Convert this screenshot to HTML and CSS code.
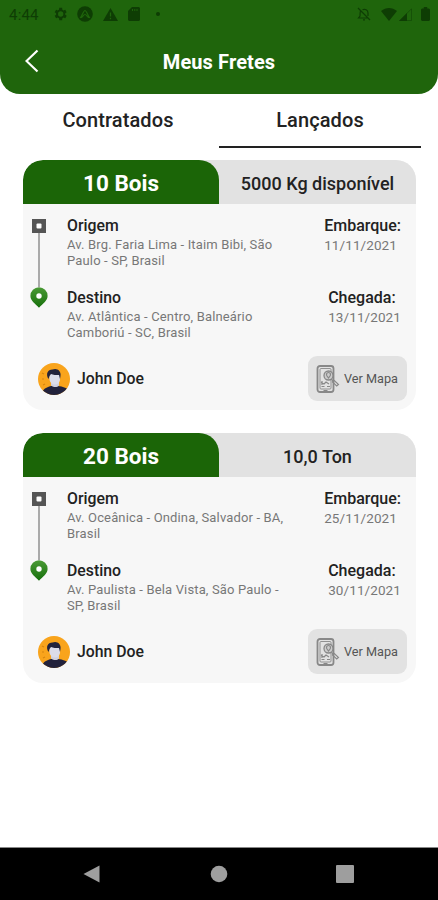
FILE: index.html
```html
<!DOCTYPE html>
<html lang="pt-BR">
<head>
    <meta charset="UTF-8">
    <meta name="viewport" content="width=device-width, initial-scale=1.0">
    <title>Meus Fretes</title>
    <link rel="stylesheet" href="styles.css">
</head>
<body>
    <!-- Ícones reutilizados nos cartões -->
    <svg class="icon-defs" width="0" height="0">
        <defs>
            <linearGradient id="pinFill" x1="0" y1="0" x2="0" y2="1">
                <stop offset="0" stop-color="#4a9a35"/>
                <stop offset="1" stop-color="#17700c"/>
            </linearGradient>
            <clipPath id="avatarClip"><circle cx="16" cy="16" r="16"/></clipPath>
            <symbol id="icon-origin" viewBox="0 0 14 14">
                <rect width="14" height="14" fill="#555"/>
                <rect x="4.5" y="4.5" width="5" height="5" rx="1" fill="#fff"/>
            </symbol>
            <symbol id="icon-pin" viewBox="0 0 18 21">
                <path d="M9 0.3a8.6 8.6 0 0 0-8.6 8.6c0 4.8 5 7.6 8.6 11.9 3.6-4.3 8.6-7.1 8.6-11.9A8.6 8.6 0 0 0 9 .3z" fill="url(#pinFill)"/>
                <circle cx="9" cy="9" r="2.7" fill="#fff"/>
            </symbol>
            <symbol id="icon-avatar" viewBox="0 0 32 32">
                <g clip-path="url(#avatarClip)">
                    <rect width="32" height="32" fill="#f9a41c"/>
                    <path d="M4 10l2 1M4 16h2M5 22l2-1" stroke="#d58410" stroke-width="1.2"/>
                    <path d="M4 32c0-6 4-7.500 9-9h7c5 .8 8 1.500 12 4.500v5z" fill="#22223c"/>
                    <path d="M13 17h8v5.500c-2 2-5 2-8 0z" fill="#d0d0e0"/>
                    <path d="M11.500 11H22v5c0 3-2 5.500-5 5.500S11.500 19 11.500 16z" fill="#dcdcea"/>
                    <path d="M10.500 16c-3-5-1-9.500 4-9.500 4-2 9 1 8 6.500l-.5 3-1-4c-3 0-6 0-8-1l-1.500 2z" fill="#22223c"/>
                </g>
            </symbol>
            <symbol id="icon-map" viewBox="0 0 24 28">
                <g fill="none" stroke="#888">
                    <rect x="1.5" y="1" width="16" height="26" rx="2.5" stroke-width="1.8"/>
                    <rect x="4" y="3.5" width="11" height="20.500" rx="1" stroke-width=".9"/>
                    <path d="M7.500 25.500h4M5 17.500l3 1.500 2-2 3 2M5.500 21.500h3M11 21.500h3M6 16v4" stroke-width="1.2"/>
                    <circle cx="12.500" cy="10.500" r="4.500" fill="#ccc" stroke-width="1.300"/>
                    <path d="M12.500 7.500c-2 0-2.500 2-1.500 3.500l1.500 2 1.500-2c1-1.500.5-3.500-1.500-3.500zM15.500 14l2 3" stroke-width="1.200"/>
                    <path d="M16.500 17l1.800-1.500 4.200 4-1.800 1.500z" stroke-width="1.100"/>
                </g>
            </symbol>
        </defs>
    </svg>

    <div class="app">
        <header class="header">
            <div class="status-bar">
                <div class="status-left">
                    <span class="clock">4:44</span>
                    <svg width="14" height="14" viewBox="2 2 20 20"><path fill="currentColor" fill-rule="evenodd" d="M19.400 13c.1-.7.1-1.300 0-2l2.100-1.600-2-3.500-2.500 1a7 7 0 0 0-1.700-1L15 3h-4l-.4 2.900c-.6.2-1.200.6-1.700 1l-2.500-1-2 3.500L6.500 11a7 7 0 0 0 0 2l-2.100 1.600 2 3.500 2.500-1c.5.400 1.100.7 1.700 1L11 21h4l.4-2.900c.6-.3 1.200-.6 1.700-1l2.500 1 2-3.500zM13 15.800a3.800 3.800 0 1 1 0-7.600 3.800 3.800 0 0 1 0 7.600z"/></svg>
                    <svg width="16" height="16" viewBox="0 0 16 16"><circle cx="8" cy="8" r="7.800" fill="currentColor"/><path d="M3.500 11.500C5.500 9 6.500 4.500 8 4.500s2.500 4.500 4.500 7c-2 .8-2.500-3-4.500-3s-2.500 3.800-4.500 3z" fill="none" stroke="#1f650c" stroke-width="1.200"/></svg>
                    <svg width="15" height="13" viewBox="0 0 15 13"><path d="M7.500 0L15 13H0z" fill="currentColor"/><path d="M7.500 4.500v4M7.500 9.800v1.500" stroke="#1f650c" stroke-width="1.300"/></svg>
                    <svg width="12" height="14" viewBox="0 0 12 14"><path d="M4 0h7l1 1v12l-1 1H1l-1-1V4z" fill="currentColor"/><path d="M4.500 2v2M6.800 2v2M9 2v2" stroke="#1f650c"/></svg>
                    <svg class="dot" width="4" height="4" viewBox="0 0 4 4"><circle cx="2" cy="2" r="2" fill="currentColor"/></svg>
                </div>
                <div class="status-right">
                    <svg class="bell" width="14" height="14" viewBox="0 0 14 14" fill="none" stroke="currentColor" stroke-width="1.200"><path d="M1 1l12 12M3.500 4C3 5 3 8 3 9l-1.500 2H11M5.500 2.800C8 1.500 11 3 11 6v3M6 12.800h2"/></svg>
                    <svg class="wifi" width="16" height="13" viewBox="0 0 16 13"><path d="M0 3c5-4 11-4 16 0L8 13z" fill="currentColor"/></svg>
                    <svg class="signal" width="13" height="13" viewBox="0 0 13 13"><path d="M12.500.8v11.700H.8z" fill="none" stroke="currentColor" opacity=".5"/><path d="M8 5v8H0z" fill="currentColor"/></svg>
                    <svg width="9" height="14" viewBox="0 0 9 14"><path d="M2.800 0h3.400v1.500H8l1 1V13l-1 1H1l-1-1V2.500l1-1h1.800z" fill="currentColor"/></svg>
                </div>
            </div>
            <div class="title-bar">
                <button class="back" aria-label="Voltar">
                    <svg width="14" height="24" viewBox="0 0 14 24"><path d="M12.500 1.500L1.500 12l11 10.500" fill="none" stroke="#fff" stroke-width="2.200"/></svg>
                </button>
                <h1>Meus Fretes</h1>
            </div>
        </header>

        <nav class="tabs">
            <a class="tab">Contratados</a>
            <a class="tab active">Lançados</a>
        </nav>

        <main class="list">
            <section class="card">
                <div class="card-top">
                    <div class="amount">10 Bois</div>
                    <div class="weight">5000 Kg disponível</div>
                </div>
                <div class="card-body">
                    <div class="route">
                        <div class="track">
                            <svg width="14" height="14"><use href="#icon-origin"/></svg>
                            <span class="line"></span>
                            <svg width="18" height="21"><use href="#icon-pin"/></svg>
                        </div>
                        <div class="stops">
                            <div class="stop">
                                <div>
                                    <h2>Origem</h2>
                                    <p>Av. Brg. Faria Lima - Itaim Bibi, São<br>Paulo - SP, Brasil</p>
                                </div>
                                <div class="date">
                                    <h2>Embarque:</h2>
                                    <p>11/11/2021</p>
                                </div>
                            </div>
                            <div class="stop">
                                <div>
                                    <h2>Destino</h2>
                                    <p>Av. Atlântica - Centro, Balneário<br>Camboriú - SC, Brasil</p>
                                </div>
                                <div class="date">
                                    <h2>Chegada:</h2>
                                    <p>13/11/2021</p>
                                </div>
                            </div>
                        </div>
                    </div>
                    <div class="card-footer">
                        <div class="person">
                            <svg width="32" height="32"><use href="#icon-avatar"/></svg>
                            <span>John Doe</span>
                        </div>
                        <button class="map-btn">
                            <svg width="24" height="28"><use href="#icon-map"/></svg>
                            <span>Ver Mapa</span>
                        </button>
                    </div>
                </div>
            </section>

            <section class="card">
                <div class="card-top">
                    <div class="amount">20 Bois</div>
                    <div class="weight">10,0 Ton</div>
                </div>
                <div class="card-body">
                    <div class="route">
                        <div class="track">
                            <svg width="14" height="14"><use href="#icon-origin"/></svg>
                            <span class="line"></span>
                            <svg width="18" height="21"><use href="#icon-pin"/></svg>
                        </div>
                        <div class="stops">
                            <div class="stop">
                                <div>
                                    <h2>Origem</h2>
                                    <p>Av. Oceânica - Ondina, Salvador - BA,<br>Brasil</p>
                                </div>
                                <div class="date">
                                    <h2>Embarque:</h2>
                                    <p>25/11/2021</p>
                                </div>
                            </div>
                            <div class="stop">
                                <div>
                                    <h2>Destino</h2>
                                    <p>Av. Paulista - Bela Vista, São Paulo -<br>SP, Brasil</p>
                                </div>
                                <div class="date">
                                    <h2>Chegada:</h2>
                                    <p>30/11/2021</p>
                                </div>
                            </div>
                        </div>
                    </div>
                    <div class="card-footer">
                        <div class="person">
                            <svg width="32" height="32"><use href="#icon-avatar"/></svg>
                            <span>John Doe</span>
                        </div>
                        <button class="map-btn">
                            <svg width="24" height="28"><use href="#icon-map"/></svg>
                            <span>Ver Mapa</span>
                        </button>
                    </div>
                </div>
            </section>
        </main>

        <footer class="nav-bar">
            <svg width="18" height="18" viewBox="0 0 18 18"><path d="M16.500.500v17L.5 9z" fill="#9e9e9e"/></svg>
            <svg width="18" height="18" viewBox="0 0 18 18"><circle cx="9" cy="9" r="8.300" fill="#9e9e9e"/></svg>
            <svg width="18" height="18" viewBox="0 0 18 18"><rect width="18" height="18" rx="1" fill="#9e9e9e"/></svg>
        </footer>
    </div>
</body>
</html>
```
FILE: styles.css
```css
* {
    box-sizing: border-box;
}

body {
    margin: 0;
    font-family: Roboto, sans-serif;
    background: #fff;
    color: #222;
    overflow: hidden;
}

svg {
    display: block;
    flex-shrink: 0;
}

h1, h2, p {
    margin: 0;
}

button {
    border: none;
    padding: 0;
    font-family: inherit;
    cursor: pointer;
}

.icon-defs {
    position: absolute;
}

.app {
    display: flex;
    flex-direction: column;
    height: 100vh;
}

/* Cabeçalho */
.header {
    height: 94px;
    background: #1f650c;
    border-radius: 0 0 20px 20px;
}

.status-bar {
    display: flex;
    justify-content: space-between;
    height: 28px;
    padding: 0 8px 0 9px;
    color: #0e3d04;
}

.status-left,
.status-right {
    display: flex;
    align-items: center;
}

.status-left {
    gap: 10px;
}

.clock {
    width: 34px;
    padding-top: 1px;
    font-size: 15px;
    letter-spacing: 0.2px;
}

.dot {
    margin-left: 6px;
}

.bell {
    margin-right: 10px;
}

.wifi {
    margin-right: 2px;
}

.signal {
    margin-right: 9px;
}

.title-bar {
    display: grid;
    grid-template-columns: 50px 1fr 50px;
    align-items: center;
    height: 66px;
}

.back {
    padding-left: 25px;
    background: none;
}

.title-bar h1 {
    padding-top: 2px;
    font-size: 20px;
    font-weight: 700;
    line-height: 24px;
    letter-spacing: 0.1px;
    color: #fff;
    text-align: center;
}

/* Abas */
.tabs {
    display: flex;
    height: 54px;
    padding: 0 17px;
}

.tab {
    flex: 1;
    padding-top: 14px;
    font-size: 20px;
    font-weight: 500;
    line-height: 24px;
    letter-spacing: 0.1px;
    text-align: center;
    border-bottom: 2px solid transparent;
}

.tab.active {
    border-color: #222;
}

/* Cartões */
.list {
    flex: 1;
    display: flex;
    flex-direction: column;
    gap: 23px;
    padding: 12px 22px 0 23px;
}

.card {
    height: 250px;
    background: #f7f7f7;
    border-radius: 20px;
    overflow: hidden;
}

.card-top {
    display: flex;
    height: 44px;
    background: #e2e2e2;
    line-height: 47px;
    text-align: center;
}

.amount {
    width: 196px;
    background: #1b6507;
    border-radius: 20px 20px 0 0;
    color: #fff;
    font-size: 22.5px;
    font-weight: 700;
}

.weight {
    flex: 1;
    font-size: 18px;
    font-weight: 500;
}

.card-body {
    padding: 13px 9px 0 7px;
}

.route {
    display: flex;
    gap: 19px;
    height: 139px;
}

.track {
    display: flex;
    flex-direction: column;
    align-items: center;
    width: 18px;
    height: 91px;
    padding-top: 2px;
}

.line {
    flex: 1;
    width: 2px;
    background: #aaa;
}

.stops {
    flex: 1;
    display: flex;
    flex-direction: column;
    gap: 20px;
}

.stop {
    display: flex;
    justify-content: space-between;
    height: 52px;
    padding-right: 6px;
}

.stop h2 {
    margin-bottom: 2px;
    font-size: 15.8px;
    font-weight: 500;
    line-height: 18px;
}

.stop p {
    font-size: 13px;
    line-height: 16px;
    letter-spacing: 0.15px;
    color: #777;
    white-space: nowrap;
}

.stop .date h2 {
    font-size: 16px;
}

.stop .date p {
    font-size: 13.5px;
    letter-spacing: 0.1px;
}

.card-footer {
    display: flex;
    justify-content: space-between;
    padding-left: 8px;
}

.person {
    display: flex;
    align-items: center;
    gap: 7px;
    font-size: 15.8px;
    font-weight: 500;
}

.map-btn {
    display: flex;
    align-items: center;
    gap: 4px;
    width: 99px;
    height: 45px;
    padding-left: 8px;
    background: #e2e2e2;
    border-radius: 9px;
    color: #555;
    font-size: 12.7px;
}

/* Barra do sistema */
.nav-bar {
    display: flex;
    justify-content: space-between;
    height: 53px;
    padding: 17px 84px 0 83px;
    background: #000;
    border-top: 1px solid #888;
}
```
